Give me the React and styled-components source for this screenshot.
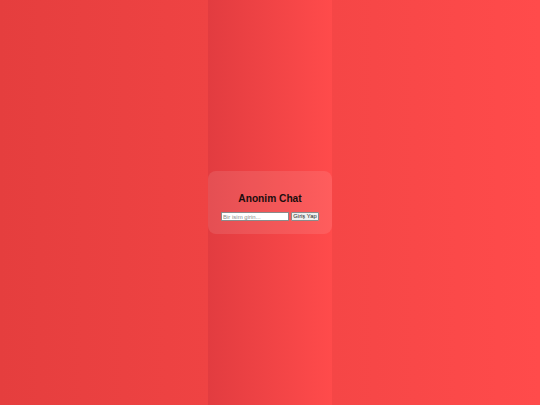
import React from "react";
import styled, { createGlobalStyle } from "styled-components";

const Global = createGlobalStyle`
  html, body { margin: 0; padding: 0; height: 100%; }
  body {
    background: linear-gradient(to right, #e53e3e, #ff4b4b);
    font-family: "Liberation Sans", Arial, sans-serif;
  }
  #root { height: 100%; display: flex; justify-content: center; }
`;

const Column = styled.div`
  height: 100vh;
  display: flex;
  flex-direction: column;
  justify-content: center;
  background: linear-gradient(to right, #e23c40, #ff4b4b);
`;

const Card = styled.div`
  width: 124px;
  box-sizing: border-box;
  padding: 22px 13px 13px;
  border-radius: 8px;
  background: rgba(255, 255, 255, 0.1);
  display: flex;
  flex-direction: column;
  align-items: center;
`;

const Title = styled.h1`
  margin: 0 0 7px;
  font-size: 10.2px;
  line-height: 12px;
  font-weight: 700;
  color: #1a0d0d;
`;

const Row = styled.div`
  display: flex;
  gap: 2px;
  align-items: center;
`;

const Input = styled.input`
  width: 68px;
  height: 9px;
  box-sizing: border-box;
  padding: 0 1px;
  border: 1px solid #8a8a8a;
  border-radius: 0;
  font-size: 6px;
  font-family: "Liberation Sans", Arial, sans-serif;
  background: #fff;
  outline: none;
  &::placeholder { color: #8a8a8a; }
`;

const Button = styled.button`
  width: 28px;
  height: 9px;
  box-sizing: border-box;
  padding: 0;
  border: 1px solid #8a8a8a;
  border-radius: 1px;
  background: #efefef;
  font-size: 5.8px;
  font-family: "Liberation Sans", Arial, sans-serif;
  color: #222;
  line-height: 1;
`;

export default function App() {
  return (
    <>
      <Global />
      <Column>
        <Card>
          <Title>Anonim Chat</Title>
          <Row>
            <Input placeholder="Bir isim girin..." />
            <Button>Giriş Yap</Button>
          </Row>
        </Card>
      </Column>
    </>
  );
}
